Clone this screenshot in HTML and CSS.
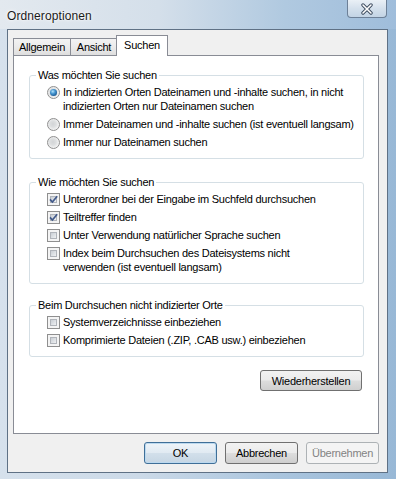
FILE: index.html
```html
<!DOCTYPE html>
<html>
<head>
	<title>Ordneroptionen</title>
	<link rel="stylesheet" href="styles.css">
</head>
<body>
	<div class="window">
		<div class="titlebar">
			<span class="title">Ordneroptionen</span>
			<div class="close">
				<svg width="14" height="12" viewBox="0 0 14 12">
					<path d="M3 2 L11 10 M11 2 L3 10" stroke="#3b4a5e" stroke-width="3.4" stroke-linecap="round"/>
					<path d="M3 2 L11 10 M11 2 L3 10" stroke="#ffffff" stroke-width="1.6" stroke-linecap="round"/>
				</svg>
			</div>
		</div>

		<div class="client">
			<div class="tabs">
				<div class="tab t-allgemein">Allgemein</div>
				<div class="tab t-ansicht">Ansicht</div>
				<div class="tab t-suchen active">Suchen</div>
			</div>

			<div class="panel">
				<fieldset class="group">
					<legend>Was möchten Sie suchen</legend>
					<div class="opts">
						<div class="opt"><span class="rb on"></span><span class="lbl">In indizierten Orten Dateinamen und -inhalte suchen, in nicht<br>indizierten Orten nur Dateinamen suchen</span></div>
						<div class="opt"><span class="rb"></span><span class="lbl">Immer Dateinamen und -inhalte suchen (ist eventuell langsam)</span></div>
						<div class="opt"><span class="rb"></span><span class="lbl">Immer nur Dateinamen suchen</span></div>
					</div>
				</fieldset>

				<fieldset class="group g2">
					<legend>Wie möchten Sie suchen</legend>
					<div class="opts">
						<div class="opt"><span class="cb"><span class="box"></span><svg width="11" height="11" viewBox="0 0 11 11"><path d="M2 5.4 L4.4 8 L9.2 2.2" fill="none" stroke="#41598a" stroke-width="1.7"/></svg></span><span class="lbl">Unterordner bei der Eingabe im Suchfeld durchsuchen</span></div>
						<div class="opt"><span class="cb"><span class="box"></span><svg width="11" height="11" viewBox="0 0 11 11"><path d="M2 5.4 L4.4 8 L9.2 2.2" fill="none" stroke="#41598a" stroke-width="1.7"/></svg></span><span class="lbl">Teiltreffer finden</span></div>
						<div class="opt"><span class="cb"><span class="box"></span></span><span class="lbl">Unter Verwendung natürlicher Sprache suchen</span></div>
						<div class="opt"><span class="cb"><span class="box"></span></span><span class="lbl">Index beim Durchsuchen des Dateisystems nicht<br>verwenden (ist eventuell langsam)</span></div>
					</div>
				</fieldset>

				<fieldset class="group g3">
					<legend>Beim Durchsuchen nicht indizierter Orte</legend>
					<div class="opts">
						<div class="opt"><span class="cb"><span class="box"></span></span><span class="lbl">Systemverzeichnisse einbeziehen</span></div>
						<div class="opt"><span class="cb"><span class="box"></span></span><span class="lbl">Komprimierte Dateien (.ZIP, .CAB usw.) einbeziehen</span></div>
					</div>
				</fieldset>

				<div class="restore">
					<button class="btn restore-btn">Wiederherstellen</button>
				</div>
			</div>

			<div class="buttons">
				<button class="btn default">OK</button>
				<button class="btn">Abbrechen</button>
				<button class="btn" disabled>Übernehmen</button>
			</div>
		</div>
	</div>
</body>
</html>
```

FILE: styles.css
```css
body {
	margin: 0;
	font-family: "Liberation Sans", Arial, sans-serif;
	font-size: 11px;
	letter-spacing: -0.25px;
	color: #000;
}
.window {
	width: 396px;
	height: 479px;
	overflow: hidden;
	background: linear-gradient(90deg, #d6e1ec 0%, #ccdae8 35%, #aac5de 70%, #98b8d6 100%);
}

/* title bar */
.titlebar {
	height: 29px;
	display: flex;
	align-items: flex-start;
	background: linear-gradient(90deg, #e3e9ef 0%, #d4dfea 40%, #b0c9e0 72%, #9fbddb 100%);
}
.title {
	margin: 9px 0 0 7px;
	font-size: 12px;
	letter-spacing: 0.1px;
	line-height: 14px;
	color: #1a1a1a;
	text-shadow: 0 0 5px #fff, 0 0 2px #fff;
}
.close {
	margin: 0 9px 0 auto;
	width: 40px;
	height: 18px;
	box-sizing: border-box;
	border: 1px solid #6d8097;
	border-top: none;
	border-radius: 0 0 4px 4px;
	background: linear-gradient(#eaf0f6, #d4e0ec 50%, #c3d4e5);
	display: flex;
	align-items: center;
	justify-content: center;
}

/* client area */
.client {
	margin-left: 7px;
	width: 381px;
	height: 444px;
	box-sizing: border-box;
	border: 1px solid #5f7185;
	background: #f0f0f0;
	padding: 5px 8px 0 5px;
}

.tabs {
	display: flex;
	align-items: flex-end;
	height: 20px;
}
.tab {
	box-sizing: border-box;
	height: 17px;
	border: 1px solid #898c95;
	border-bottom: none;
	background: linear-gradient(#f3f3f3, #ebebeb 50%, #dedede);
	text-align: center;
	line-height: 16px;
}
.t-allgemein { width: 58px; }
.t-ansicht { width: 48px; margin-left: -1px; }
.tab.active {
	width: 52px;
	height: 21px;
	margin-left: -2px;
	margin-bottom: -1px;
	line-height: 18px;
	background: #fff;
	position: relative;
	z-index: 1;
}

.panel {
	box-sizing: border-box;
	height: 379px;
	border: 1px solid #898c95;
	background: #fff;
	padding: 12px 14px 0 15px;
}

/* group boxes */
fieldset.group {
	margin: 0;
	padding: 0;
	border: 1px solid #d5dfe5;
	border-radius: 3px;
	min-width: 0;
}
fieldset.g2 { margin-top: 16px; }
fieldset.g3 { margin-top: 14px; }
legend {
	margin-left: 6px;
	padding: 0 2px;
	line-height: 14px;
}
.opts { padding: 3px 0 9px 17px; }
.opt {
	display: flex;
	align-items: flex-start;
	line-height: 14px;
	white-space: nowrap;
}
.opt + .opt { margin-top: 4px; }
.lbl { margin-left: 3px; }

/* checkbox */
.cb, .rb { margin-top: 1px; }
.cb {
	flex: none;
	width: 13px;
	height: 13px;
	box-sizing: border-box;
	border: 1px solid #8f8f8f;
	background: #f4f4f4;
	display: grid;
	place-items: center;
}
.cb .box, .cb svg { grid-area: 1 / 1; }
.cb .box {
	width: 7px;
	height: 7px;
	box-sizing: border-box;
	border: 1px solid #b0b4ba;
	background: linear-gradient(135deg, #c9ced4, #eef0f2);
}

/* radio */
.rb {
	flex: none;
	width: 13px;
	height: 13px;
	box-sizing: border-box;
	border: 1px solid #8f8f8f;
	border-radius: 50%;
	background: radial-gradient(circle at 45% 45%, #d2d4d6 0, #dcdedf 35%, #f6f6f6 75%);
	display: grid;
	place-items: center;
}
.rb.on::before {
	content: "";
	width: 7px;
	height: 7px;
	border-radius: 50%;
	background: radial-gradient(circle at 40% 35%, #b6e3fa 0, #4a9ad4 35%, #1b5b96 75%, #12436f);
}

/* buttons */
.btn {
	font: inherit;
	letter-spacing: -0.25px;
	color: #000;
	height: 22px;
	width: 73px;
	padding: 0;
	box-sizing: border-box;
	border: 1px solid #707070;
	border-radius: 3px;
	background: linear-gradient(#f2f2f2 0, #ebebeb 48%, #dddddd 52%, #cfcfcf 100%);
}
.btn.default {
	border-color: #3f6f98;
	background: linear-gradient(#eef4f9 0, #e1eaf2 48%, #d2dfea 52%, #c6d6e4 100%);
	box-shadow: inset 0 0 0 1px #bcd9ef;
}
.btn:disabled {
	border-color: #adb2b5;
	background: #f4f4f4;
	color: #838383;
}
.restore {
	display: flex;
	justify-content: flex-end;
	margin-top: 13px;
	padding-right: 2px;
}
.restore-btn {
	width: 102px;
	height: 21px;
}
.buttons {
	display: flex;
	justify-content: flex-end;
	gap: 8px;
	margin-top: 8px;
}
```
